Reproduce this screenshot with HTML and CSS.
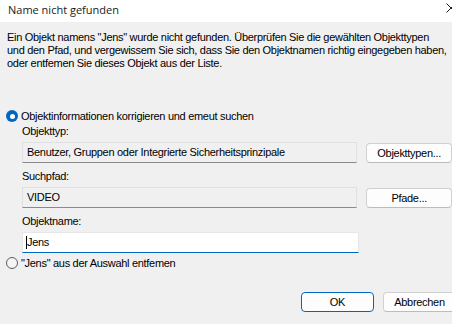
FILE: index.html
```html
<html>
    <head>
        <title>Name nicht gefunden</title>
        <meta charset="utf-8">
        <link rel="stylesheet" href="styles.css">
    </head>
    <body>
        <div class="window">
            <div class="titlebar">
                <span class="title">Name nicht gefunden</span>
                <svg class="close" width="10" height="10" viewBox="0 0 10 10">
                    <path d="M0.5 0.5 L9.5 9.5 M9.5 0.5 L0.5 9.5" stroke="#1a1a1a" stroke-width="1" fill="none"/>
                </svg>
            </div>

            <div class="dialog">
                <div class="message">
                    Ein Objekt namens "Jens" wurde nicht gefunden. Überprüfen Sie die gewählten Objekttypen<br>
                    und den Pfad, und vergewissem Sie sich, dass Sie den Objektnamen richtig eingegeben haben,<br>
                    oder entfemen Sie dieses Objekt aus der Liste.
                </div>

                <label class="choice first">
                    <span class="radio checked"></span>
                    <span>Objektinformationen korrigieren und emeut suchen</span>
                </label>

                <div class="group">
                    <div class="caption">Objekttyp:</div>
                    <div class="row">
                        <div class="field">Benutzer, Gruppen oder Integrierte Sicherheitsprinzipale</div>
                        <button class="btn" type="button">Objekttypen...</button>
                    </div>

                    <div class="caption">Suchpfad:</div>
                    <div class="row">
                        <div class="field">VIDEO</div>
                        <button class="btn" type="button">Pfade...</button>
                    </div>

                    <div class="caption">Objektname:</div>
                    <div class="row">
                        <div class="field input"><span class="caret"></span>Jens</div>
                    </div>
                </div>

                <label class="choice second">
                    <span class="radio"></span>
                    <span>"Jens" aus der Auswahl entfemen</span>
                </label>

                <div class="footer">
                    <button class="btn default" type="button">OK</button>
                    <button class="btn" type="button">Abbrechen</button>
                </div>
            </div>
        </div>
    </body>
</html>
```

FILE: styles.css
```css
html,
body {
    margin: 0;
    width: 452px;
    height: 324px;
    overflow: hidden;
    background-color: #f0f0f0;
}
.window {
    width: 452px;
    height: 324px;
    font-family: "Liberation Sans", Arial, sans-serif;
    font-size: 11px;
    letter-spacing: -0.3px;
    color: #000;
}
.titlebar {
    height: 22px;
    background-color: #fff;
    display: flex;
    align-items: center;
    justify-content: space-between;
    padding-left: 8px;
}
.title {
    font-family: "Open Sans", sans-serif;
    font-size: 11px;
    letter-spacing: 0;
    color: #1a1a1a;
    margin-top: -4px;
}
.close {
    margin-right: -4px;
    margin-top: -6px;
}
.dialog {
    white-space: nowrap;
}
.message {
    padding: 9px 0 0 7px;
    line-height: 13px;
}
.choice {
    display: flex;
    align-items: center;
    height: 14px;
    padding-left: 6px;
    gap: 3px;
}
.choice.first {
    margin-top: 39px;
}
.choice.second {
    margin-top: 3px;
}
.radio {
    box-sizing: border-box;
    width: 12px;
    height: 12px;
    border-radius: 50%;
    border: 1px solid #5c5c5c;
    background-color: #f5f5f5;
}
.radio.checked {
    border: none;
    background-color: #0067c0;
    display: flex;
    align-items: center;
    justify-content: center;
}
.radio.checked::after {
    content: "";
    width: 5px;
    height: 5px;
    border-radius: 50%;
    background-color: #fff;
}
.group {
    padding-left: 22px;
}
.caption {
    line-height: 13px;
    margin-top: 7px;
}
.group .caption:first-child {
    margin-top: 2px;
}
.row {
    display: flex;
    align-items: flex-start;
    gap: 9px;
    margin-top: 4px;
}
.field {
    box-sizing: border-box;
    width: 337px;
    height: 21px;
    padding-left: 4px;
    line-height: 19px;
    background-color: #f0f0f0;
    border: 1px solid #e0e0e0;
    border-bottom-color: #8a8a8a;
}
.field.input {
    background-color: #fff;
    border-color: #e6e6e6;
    border-bottom: 1px solid #0067c0;
    padding-left: 3px;
}
.caret {
    display: inline-block;
    width: 1px;
    height: 13px;
    background-color: #000;
    vertical-align: -3px;
    margin-right: 0;
}
.btn {
    box-sizing: border-box;
    width: 86px;
    height: 20px;
    margin-top: 1px;
    padding: 0;
    font-family: "Liberation Sans", Arial, sans-serif;
    font-size: 11px;
    letter-spacing: -0.3px;
    color: #000;
    background-color: #fdfdfd;
    border: 1px solid #d0d0d0;
    border-bottom-color: #bcbcbc;
    border-radius: 4px;
}
.footer {
    display: flex;
    gap: 9px;
    margin-top: 22px;
    padding-left: 301px;
}
.footer .btn {
    width: 73px;
    margin-top: 0;
    flex-shrink: 0;
}
.btn.default {
    border-color: #0067c0;
}
```
